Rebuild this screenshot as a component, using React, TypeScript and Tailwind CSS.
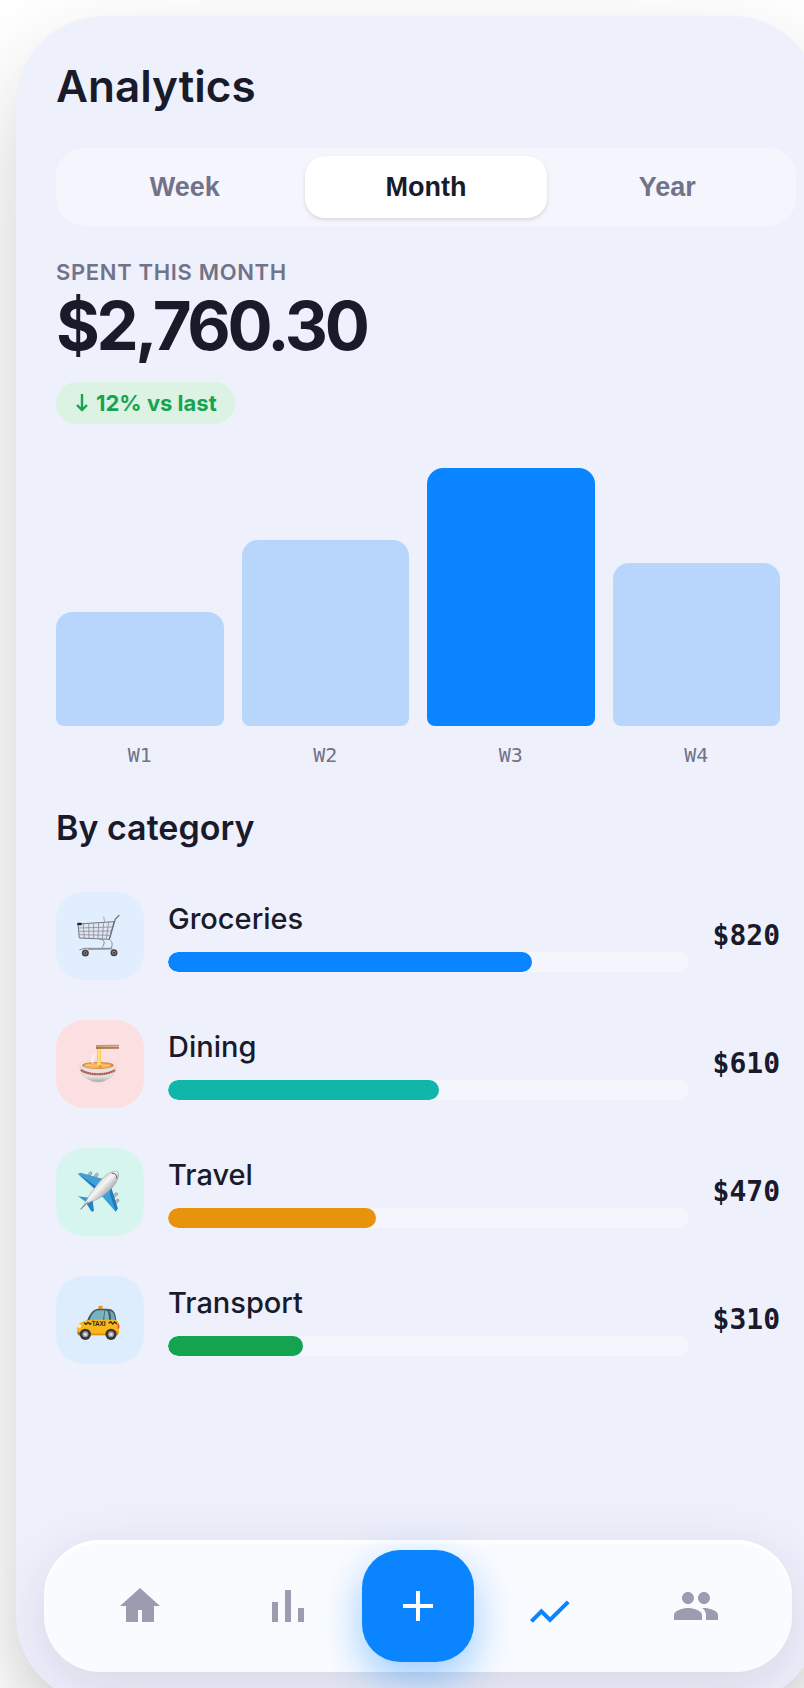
import { useState, type ReactNode } from 'react'

const PERIODS = ['Week', 'Month', 'Year']

interface WeekBar {
  label: string
  percent: number
  active?: boolean
}

const WEEKS: WeekBar[] = [
  { label: 'W1', percent: 44 },
  { label: 'W2', percent: 72 },
  { label: 'W3', percent: 100, active: true },
  { label: 'W4', percent: 63 },
]

interface Category {
  name: string
  amount: string
  percent: number
  tileClass: string
  barClass: string
  icon: ReactNode
}

const CATEGORIES: Category[] = [
  { name: 'Groceries', amount: '$820', percent: 70, tileClass: 'bg-[#e0eefe]', barClass: 'bg-[#0a84ff]', icon: <CartIcon /> },
  { name: 'Dining', amount: '$610', percent: 52, tileClass: 'bg-[#fcdfe0]', barClass: 'bg-[#12b5a9]', icon: <NoodlesIcon /> },
  { name: 'Travel', amount: '$470', percent: 40, tileClass: 'bg-[#d7f5ef]', barClass: 'bg-[#e8930c]', icon: <PlaneIcon /> },
  { name: 'Transport', amount: '$310', percent: 26, tileClass: 'bg-[#deedfe]', barClass: 'bg-[#14a350]', icon: <TaxiIcon /> },
]

export default function App() {
  const [period, setPeriod] = useState('Month')

  return (
    <div className="min-h-screen overflow-hidden bg-white pl-4 pt-4 font-['Inter',sans-serif] text-[#191a2a]">
      <main className="-mb-4 -mr-4 flex min-h-screen flex-col rounded-[88px] bg-[#eef0fc] px-10 pb-8 pt-11 shadow-[0_44px_100px_-8px_rgba(20,20,25,0.23)]">
        <h1 className="text-[44px] font-semibold leading-[52px]">Analytics</h1>

        <div className="-mr-4 mt-9 flex rounded-[28px] bg-[#f4f5fd] p-2" role="group" aria-label="Period">
          {PERIODS.map((item) => (
            <button key={item} type="button" aria-pressed={period === item} onClick={() => setPeriod(item)} className={periodClass(period === item)}>
              {item}
            </button>
          ))}
        </div>

        <section className="mt-8 flex flex-col items-start">
          <p className="text-[22px] font-semibold uppercase leading-7 tracking-[0.03em] text-[#727289]">Spent this month</p>
          <p className="mt-1 text-[67px] font-bold leading-[72px] tracking-tighter">$2,760.30</p>
          <p className="mt-5 flex h-[42px] items-center gap-2 rounded-full bg-[#dcf3e3] pl-5 pr-[18px] text-[22px] font-bold text-[#16a352]">
            <svg viewBox="0 0 12 18" className="h-[18px] w-3" fill="none" stroke="currentColor" strokeWidth="2.4" aria-hidden="true">
              <path d="M6 0v16M1 11l5 5 5-5" />
            </svg>
            12% vs last
          </p>
        </section>

        <section className="mt-11 grid grid-cols-4 gap-x-[18px]" aria-label="Weekly spending">
          {WEEKS.map((week) => (
            <div key={week.label} className="flex flex-col">
              <div className="flex h-[258px] items-end">
                <div
                  className={`w-full rounded-b-lg rounded-t-2xl ${week.active ? 'bg-[#0a84ff]' : 'bg-[#b8d6fc]'}`}
                  style={{ height: `${week.percent}%` }}
                />
              </div>
              <span className="mt-4 text-center font-['DejaVu_Sans_Mono',monospace] text-[20px] leading-[26px] text-[#727289]">{week.label}</span>
            </div>
          ))}
        </section>

        <h2 className="mt-[38px] text-[34px] font-semibold leading-[44px]">By category</h2>

        <ul className="mt-[42px] flex flex-col gap-10">
          {CATEGORIES.map((category) => (
            <li key={category.name} className="flex items-center gap-6">
              <div className={`flex size-[88px] shrink-0 items-center justify-center rounded-[28px] ${category.tileClass}`}>{category.icon}</div>
              <div className="min-w-0 flex-1">
                <p className="text-[29px] font-medium leading-[38px]">{category.name}</p>
                <div className="mt-3.5 h-5 overflow-hidden rounded-full bg-[#f4f5fd]">
                  <div className={`h-full rounded-full ${category.barClass}`} style={{ width: `${category.percent}%` }} />
                </div>
              </div>
              <span className="font-['DejaVu_Sans_Mono',monospace] text-[28px] font-bold leading-9">{category.amount}</span>
            </li>
          ))}
        </ul>

        <nav className="-mx-3 mt-auto flex h-[132px] items-center rounded-[56px] bg-[#f9fbff] px-[22px] shadow-[0_16px_60px_rgba(30,30,60,0.12),inset_0_4px_2px_rgba(255,255,255,0.9)]" aria-label="Main">
          <NavButton label="Home">
            <path d="M11 20v-6h2v6h6v-8h3L12 3 2 12h3v8z" />
          </NavButton>
          <NavButton label="Stats">
            <path d="M4 10h3v10H4zM10.5 4h3v16h-3zM17 13h3v7h-3z" />
          </NavButton>
          <button type="button" aria-label="Add" className="flex size-28 shrink-0 cursor-pointer items-center justify-center rounded-[38px] bg-[#0a84ff] text-white shadow-[0_16px_40px_rgba(10,132,255,0.4)]">
            <svg viewBox="0 0 32 32" className="size-8" fill="none" stroke="currentColor" strokeWidth="4" aria-hidden="true">
              <path d="M16 1v30M1 16h30" />
            </svg>
          </button>
          <NavButton label="Analytics" active>
            <path d="M3.7 19.7l5-5 4.3 4.3 9.1-9.1" fill="none" stroke="currentColor" strokeWidth="2" />
          </NavButton>
          <NavButton label="Friends">
            <path d="M16 11c1.66 0 2.99-1.34 2.99-3S17.66 5 16 5s-3 1.34-3 3 1.34 3 3 3zm-8 0c1.66 0 2.99-1.34 2.99-3S9.66 5 8 5 5 6.34 5 8s1.34 3 3 3zm0 2c-2.33 0-7 1.17-7 3.5V19h14v-2.5C15 14.17 10.33 13 8 13zm8 0c-.29 0-.62.02-.97.05 1.16.84 1.97 1.97 1.97 3.45V19h6v-2.5c0-2.33-4.67-3.5-7-3.5z" />
          </NavButton>
        </nav>
      </main>
    </div>
  )
}

function periodClass(isSelected: boolean) {
  const selectedClass = isSelected ? 'bg-white text-[#191a2a] shadow-[0_2px_4px_rgba(0,0,0,0.12)]' : 'text-[#727289]'
  return `h-[62px] flex-1 cursor-pointer rounded-[20px] font-['Liberation_Sans',sans-serif] text-[27px] font-bold leading-8 ${selectedClass}`
}

function NavButton({ label, active = false, children }: { label: string; active?: boolean; children: ReactNode }) {
  return (
    <button type="button" aria-label={label} className={`flex h-full flex-1 cursor-pointer items-center justify-center ${active ? 'text-[#0a84ff]' : 'text-[#9c9bb0]'}`}>
      <svg viewBox="0 0 24 24" className="size-12" fill="currentColor" aria-hidden="true">
        {children}
      </svg>
    </button>
  )
}

function CartIcon() {
  return (
    <svg viewBox="0 0 132 132" className="size-11 overflow-visible" fill="none" aria-hidden="true">
      <path d="M0 30l108-7-14 53-90-4z" fill="#d9dde6" fillOpacity="0.5" stroke="#77777f" strokeWidth="3" />
      <path d="M1 42l103-3M2 52l99-1M3 62l95 2M16 29l3 44M32 28l1 45M47 27v47M62 26l-2 48M77 25l-4 50M92 24l-7 51" stroke="#85858d" strokeWidth="2.2" />
      <path d="M123 4l-11 11-18 61" stroke="#6c6c73" strokeWidth="3.5" strokeLinecap="round" />
      <path d="M77 7l3 17" stroke="#909097" strokeWidth="2" />
      <path d="M64 75c22 2 14 18 8 26M94 76c11 8 9 18 6 26M4 108l14-5h83M30 106l74-1" stroke="#898991" strokeWidth="3" />
      <rect x="-2" y="26" width="13" height="8" rx="2" fill="#20232d" />
      <circle cx="22" cy="117" r="8" fill="#97917f" stroke="#44444a" strokeWidth="5" />
      <circle cx="108" cy="116" r="8" fill="#97917f" stroke="#44444a" strokeWidth="5" />
      <circle cx="22" cy="117" r="3" fill="#35353a" />
      <circle cx="108" cy="116" r="3" fill="#35353a" />
    </svg>
  )
}

function NoodlesIcon() {
  return (
    <svg viewBox="0 0 132 132" className="size-11 overflow-visible" fill="none" aria-hidden="true">
      <defs>
        <linearGradient id="bowl-side" x1="0" y1="0" x2="0" y2="1">
          <stop offset="0" stopColor="#e9e8e5" />
          <stop offset="0.7" stopColor="#dfe1df" />
          <stop offset="1" stopColor="#a5a8a6" />
        </linearGradient>
      </defs>
      <path d="M6 68c0 28 14 39 31 46 4 8 42 8 46 0 17-7 31-18 31-46z" fill="url(#bowl-side)" stroke="#bfc0bd" strokeWidth="1.5" />
      <path d="M9 84c24 17 78 17 102 0" stroke="#d39a96" strokeWidth="8" />
      <path d="M9 84c24 17 78 17 102 0" stroke="#b04745" strokeWidth="5" strokeDasharray="5 2" />
      <ellipse cx="60" cy="69" rx="54" ry="14" fill="#f4f1ee" stroke="#d0cecb" strokeWidth="1.5" />
      <ellipse cx="60" cy="70" rx="48" ry="11" fill="#e08b42" />
      <ellipse cx="58" cy="71" rx="40" ry="8" fill="#f6ae60" />
      <path d="M24 71c12-8 20 5 32-1s22 6 38-1" stroke="#ffcf8a" strokeWidth="3" />
      <path d="M46 64c-10-10 6-16 0-26" stroke="#fff" strokeOpacity="0.5" strokeWidth="8" />
      <path d="M57 18v52c0 9 12 9 12 0V18" fill="#f5cf57" />
      <path d="M63 18v54" stroke="#fff0a0" strokeWidth="3" />
      <circle cx="66" cy="74" r="6" fill="#e5a23a" />
      <path d="M54 9l69-1v5l-69 2z" fill="#c39a6b" />
      <path d="M54 15l69-1v6l-69 1z" fill="#ad7d50" />
    </svg>
  )
}

function PlaneIcon() {
  return (
    <svg viewBox="0 0 132 132" className="size-11 overflow-visible" aria-hidden="true">
      <defs>
        <linearGradient id="plane-body" x1="0.25" y1="0.3" x2="0.7" y2="0.75">
          <stop offset="0" stopColor="#c3c3c7" />
          <stop offset="0.45" stopColor="#f5f5f6" />
          <stop offset="1" stopColor="#85858a" />
        </linearGradient>
      </defs>
      <g fill="#b9bbc0" stroke="#77797e" strokeWidth="1.5">
        <rect x="32" y="5" width="8" height="15" rx="4" transform="rotate(35 36 12)" />
        <rect x="51" y="9" width="8" height="15" rx="4" transform="rotate(35 55 16)" />
        <rect x="108" y="67" width="8" height="16" rx="4" transform="rotate(50 112 75)" />
        <rect x="112" y="86" width="8" height="16" rx="4" transform="rotate(50 116 94)" />
      </g>
      <path d="M-1 11l9-3 71 20-27 31z" fill="#3d9fdb" />
      <path d="M-1 11l6 5 49 42 4-6z" fill="#2371ad" />
      <path d="M98 48l21 67-6 10-45-51z" fill="#36a0dd" />
      <path d="M98 48l21 67-6 10-17-54z" fill="#217ab9" />
      <path d="M0 79l34 4-9 14z" fill="#3298d6" />
      <path d="M44 90l4 33-7 2-15-23z" fill="#2584c4" />
      <path d="M8 118c14-17 20-36 42-64C76 17 100 0 117 4c11 6 3 33-22 57-20 19-40 30-55 33-12 4-22 16-32 24z" fill="url(#plane-body)" stroke="#8f9095" strokeWidth="1.5" />
      <path d="M101 10c10-2 16 5 15 16" fill="none" stroke="#55585f" strokeWidth="3" />
      <path d="M8 118l22-23" stroke="#77787c" strokeWidth="3" />
    </svg>
  )
}

function TaxiIcon() {
  return (
    <svg viewBox="0 0 132 132" className="size-11 overflow-visible" aria-hidden="true">
      <rect x="61" y="23" width="13" height="11" rx="3" fill="#f09a23" />
      <path d="M27 69c8-23 18-36 35-37h24c20 0 27 9 29 37z" fill="#48565d" />
      <path d="M34 67c8-20 15-30 29-30h17l-5 30z" fill="#72b5c1" />
      <path d="M84 37c5 1 8 6 9 30H79c0-16 1-24 5-30z" fill="#79bbc5" />
      <path d="M94 38c12 3 16 10 17 28H99c0-14-1-22-5-28z" fill="#69aab7" />
      <path d="M-2 108c-2-19-2-27 9-34 10-7 27-9 47-9h56c13 1 14 13 13 24 1 13-1 21-6 23H2z" fill="#f9b719" />
      <path d="M-2 100c25 9 94 9 124-2-1 9-1 13-5 14H2z" fill="#e6900b" />
      <path d="M18 74l6 5 6-6 6 6 4-4M92 76l6-5 6 7 6-6 7 6" fill="none" stroke="#302b21" strokeWidth="4" />
      <text x="41" y="84" fontSize="19" fontWeight="700" fontFamily="Liberation Sans, sans-serif" fill="#302718">TAXI</text>
      <path d="M39 68c-1-6 8-7 10-2v4z" fill="#f19b18" />
      <ellipse cx="4" cy="84" rx="6" ry="5" fill="#fff2bd" />
      <rect x="119" y="78" width="5" height="14" rx="2" fill="#df4f31" />
      <path d="M-2 103l14-1 2 8-13 2z" fill="#8b7759" />
      <circle cx="22" cy="109" r="17" fill="#3b3636" />
      <circle cx="22" cy="109" r="9" fill="#9b9ba0" />
      <circle cx="22" cy="109" r="5" fill="#dedee0" />
      <circle cx="99" cy="109" r="17" fill="#3b3636" />
      <circle cx="99" cy="109" r="9" fill="#9b9ba0" />
      <circle cx="99" cy="109" r="5" fill="#dedee0" />
    </svg>
  )
}
